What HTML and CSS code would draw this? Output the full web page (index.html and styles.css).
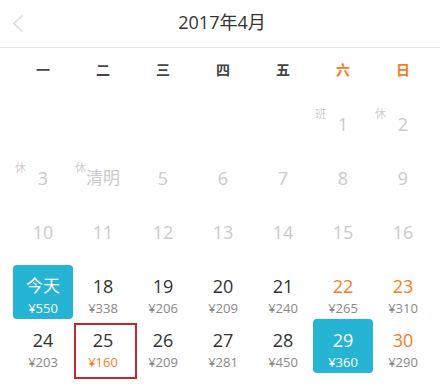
FILE: index.html
```html
<!DOCTYPE html>
<html lang="zh-CN">
<head>
<meta charset="utf-8">
<link rel="stylesheet" href="styles.css">
</head>
<body>
<div class="cal">
  <header class="head">
    <span class="back"><svg width="12" height="19" viewBox="0 0 12 19"><path d="M10.5 1.5 L2 9.5 L10.5 17.5" fill="none" stroke="#dcdcdc" stroke-width="1.6"/></svg></span>
    <h1 class="title">2017年4月</h1>
  </header>
  <div class="week">
    <span>一</span><span>二</span><span>三</span><span>四</span><span>五</span><span class="wk">六</span><span class="wk">日</span>
  </div>
  <div class="grid">
    <div class="cell"></div><div class="cell"></div><div class="cell"></div><div class="cell"></div><div class="cell"></div>
    <div class="cell past"><span class="tag">班</span><span class="num">1</span></div>
    <div class="cell past"><span class="tag">休</span><span class="num">2</span></div>

    <div class="cell past"><span class="tag">休</span><span class="num">3</span></div>
    <div class="cell past"><span class="tag">休</span><span class="num fest">清明</span></div>
    <div class="cell past"><span class="num">5</span></div>
    <div class="cell past"><span class="num">6</span></div>
    <div class="cell past"><span class="num">7</span></div>
    <div class="cell past"><span class="num">8</span></div>
    <div class="cell past"><span class="num">9</span></div>

    <div class="cell past"><span class="num">10</span></div>
    <div class="cell past"><span class="num">11</span></div>
    <div class="cell past"><span class="num">12</span></div>
    <div class="cell past"><span class="num">13</span></div>
    <div class="cell past"><span class="num">14</span></div>
    <div class="cell past"><span class="num">15</span></div>
    <div class="cell past"><span class="num">16</span></div>

    <div class="cell today"><span class="num fest">今天</span><span class="price">¥550</span></div>
    <div class="cell"><span class="num">18</span><span class="price">¥338</span></div>
    <div class="cell"><span class="num">19</span><span class="price">¥206</span></div>
    <div class="cell"><span class="num">20</span><span class="price">¥209</span></div>
    <div class="cell"><span class="num">21</span><span class="price">¥240</span></div>
    <div class="cell weekend"><span class="num">22</span><span class="price">¥265</span></div>
    <div class="cell weekend"><span class="num">23</span><span class="price">¥310</span></div>

    <div class="cell"><span class="num">24</span><span class="price">¥203</span></div>
    <div class="cell low"><span class="num">25</span><span class="price">¥160</span></div>
    <div class="cell"><span class="num">26</span><span class="price">¥209</span></div>
    <div class="cell"><span class="num">27</span><span class="price">¥281</span></div>
    <div class="cell"><span class="num">28</span><span class="price">¥450</span></div>
    <div class="cell selected"><span class="num">29</span><span class="price">¥360</span></div>
    <div class="cell weekend"><span class="num">30</span><span class="price">¥290</span></div>
  </div>
</div>
</body>
</html>
```
FILE: styles.css
```css
html, body {
  margin: 0;
  padding: 0;
  background: #fff;
}
body {
  width: 440px;
  height: 389px;
  overflow: hidden;
  font-family: "Open Sans", "Noto Sans CJK SC", sans-serif;
  color: #333;
}
.cal {
  width: 440px;
}
.head {
  position: relative;
  height: 47px;
  border-bottom: 1px solid #e3e3e3;
  display: flex;
  align-items: center;
  justify-content: center;
}
.back {
  position: absolute;
  left: 12px;
  top: 14px;
  display: block;
  line-height: 0;
}
.title {
  margin: 0 0 4px 4px;
  font-size: 18px;
  font-weight: normal;
  color: #333;
  line-height: 24px;
}
.week {
  display: grid;
  grid-template-columns: repeat(7, 60px);
  padding: 0 0 0 13px;
  height: 43px;
  align-items: center;
  font-size: 14px;
  font-weight: bold;
  color: #444;
  margin-bottom: 12px;
}
.week span {
  text-align: center;
  line-height: 20px;
  padding-top: 1px;
}
.week .wk {
  color: #f77c1e;
}
.grid {
  display: grid;
  grid-template-columns: repeat(7, 60px);
  grid-auto-rows: 54px;
  padding-left: 13px;
}
.cell {
  position: relative;
  display: flex;
  flex-direction: column;
  align-items: center;
  padding-top: 10px;
  box-sizing: border-box;
  border-radius: 4px;
}
.num {
  font-size: 18px;
  line-height: 22px;
  color: #333;
}
.num.fest {
  font-size: 17px;
}
.price {
  margin-top: 3px;
  font-size: 13px;
  line-height: 16px;
  color: #888;
}
.tag {
  position: absolute;
  left: 2px;
  top: 4px;
  font-size: 11px;
  line-height: 14px;
  color: #d0cbcb;
}
.past .num {
  color: #cacaca;
}
.weekend .num {
  color: #f77c1e;
}
.low .price {
  color: #f77c1e;
}
.today, .selected {
  background: #26b4d4;
}
.today .num, .today .price,
.selected .num, .selected .price {
  color: #fff;
}
.low::after {
  content: "";
  position: absolute;
  left: 1px;
  top: 4px;
  width: 63px;
  height: 56px;
  box-sizing: border-box;
  border: 2px solid #bb2a2e;
}
```
